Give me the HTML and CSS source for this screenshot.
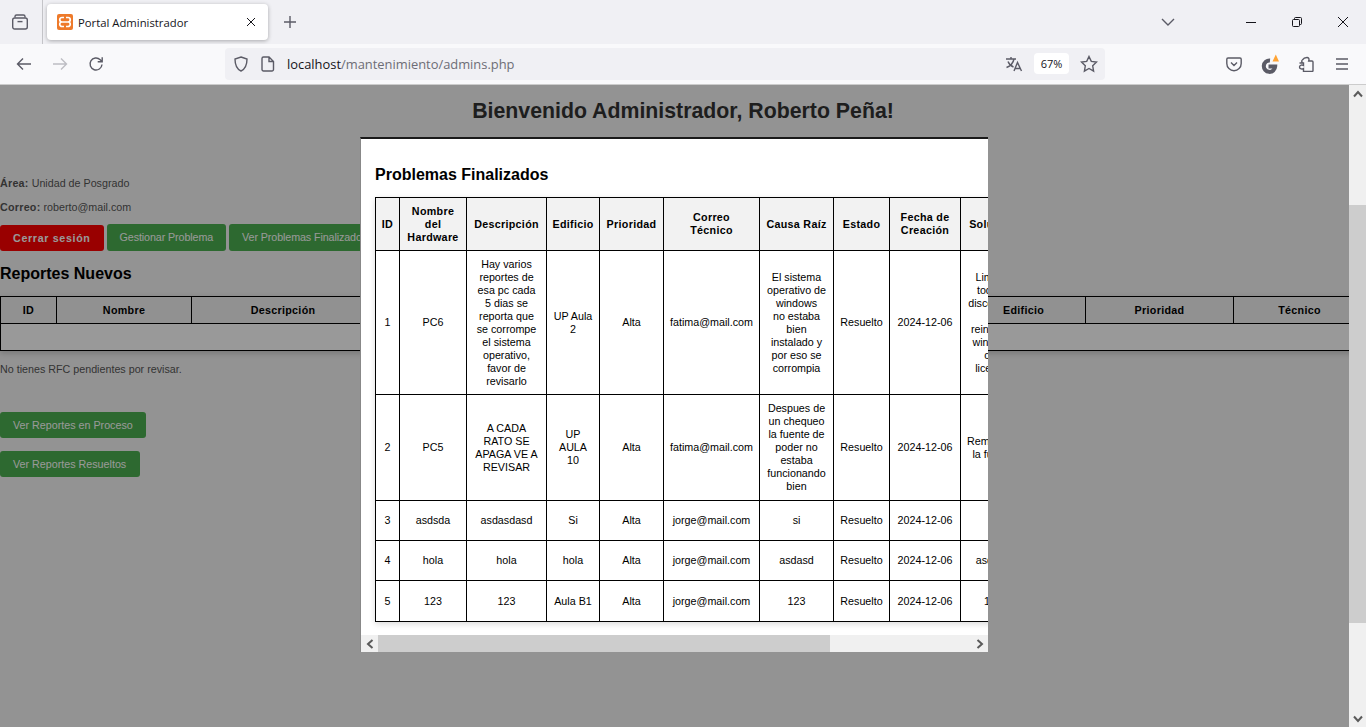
FILE: index.html
```html
<!DOCTYPE html>
<html lang="es">
<head>
    <meta charset="UTF-8">
    <meta name="viewport" content="width=device-width, initial-scale=1.0">
    <title>Portal Administrador</title>
    <link rel="stylesheet" href="styles.css">
</head>
<body>
    <!-- browser chrome -->
    <div class="tabbar">
        <div class="tab-btn first">
            <svg width="18" height="18" viewBox="0 0 18 18" class="ico"><path d="M4 4.5V3.6A1.6 1.6 0 0 1 5.6 2h6.8A1.6 1.6 0 0 1 14 3.6v.9"/><rect x="1.7" y="5" width="14.6" height="11" rx="2"/><path d="M6.5 8.6h5"/></svg>
        </div>
        <div class="tab-sep"></div>
        <div class="tab">
            <svg width="16" height="16" viewBox="0 0 16 16" class="favicon"><rect width="16" height="16" rx="2" fill="#EE7A2A"/><path d="M7 3.500H5a2.250 2.250 0 0 0 0 4.500h6a2.250 2.250 0 0 0 0-4.500H9M7 12.500H5a2.250 2.250 0 0 1 0-4.500M9 12.500h2a2.250 2.250 0 0 0 0-4.500" fill="none" stroke="#fff" stroke-width="1.700"/></svg>
            <span class="tab-title">Portal Administrador</span>
            <svg width="10" height="10" viewBox="0 0 10 10" class="thin"><path d="M1 1l8 8M9 1L1 9"/></svg>
        </div>
        <div class="tab-btn plus">
            <svg width="14" height="14" viewBox="0 0 14 14" class="ico"><path d="M7 1v12M1 7h12"/></svg>
        </div>
        <div class="spacer"></div>
        <div class="tab-btn chevron">
            <svg width="14" height="8" viewBox="0 0 14 8" class="ico"><path d="M1 1l6 6 6-6"/></svg>
        </div>
        <div class="win-btn"><svg width="10" height="10" viewBox="0 0 10 10" class="thin"><path d="M0 5.500h10"/></svg></div>
        <div class="win-btn"><svg width="10" height="10" viewBox="0 0 10 10" class="thin"><rect x=".5" y="2.500" width="7" height="7" rx="1"/><path d="M2.500 2.500V1.500a1 1 0 0 1 1-1h5a1 1 0 0 1 1 1v5a1 1 0 0 1-1 1h-1"/></svg></div>
        <div class="win-btn"><svg width="10" height="10" viewBox="0 0 10 10" class="thin"><path d="M0 0l10 10M10 0L0 10"/></svg></div>
    </div>

    <div class="toolbar">
        <div class="nav-btn"><svg width="16" height="16" viewBox="0 0 16 16" class="ico"><path d="M15 8H1.500M7 2.500L1.500 8 7 13.500"/></svg></div>
        <div class="nav-btn off"><svg width="16" height="16" viewBox="0 0 16 16" class="ico"><path d="M1 8h13.500M9 2.500L14.500 8 9 13.500"/></svg></div>
        <div class="nav-btn"><svg width="16" height="16" viewBox="0 0 16 16" class="ico"><path d="M14 8.500A6 6 0 1 1 12.200 3.700L14 5.500M14.200 1.200v4.500H9.700"/></svg></div>
        <div class="urlbar">
            <svg width="16" height="16" viewBox="0 0 16 16" class="ico url-shield"><path d="M8 1l6 2c0 6-1.500 10-6 12C3.500 13 2 9 2 3z"/></svg>
            <svg width="14" height="16" viewBox="0 0 14 16" class="ico url-page"><path d="M2.500 1h5.500l4.500 4.500V13.500a1.500 1.500 0 0 1-1.500 1.500h-8.500A1.500 1.500 0 0 1 1 13.500V2.500A1.500 1.500 0 0 1 2.500 1zM8 1v4.500h4.500"/></svg>
            <span class="url"><span class="host">localhost</span>/mantenimiento/admins.php</span>
            <div class="spacer"></div>
            <svg width="18" height="16" viewBox="0 0 18 16" class="ico"><path d="M1 3h10M6 1v2M9 3c-.8 4-3.600 7-7.500 8.500M3 5.500c1 2.500 3 4.500 5.500 5.500M9 15l3.500-8.500L16.500 15M10.300 12.500h5"/></svg>
            <span class="zoom-badge">67%</span>
            <svg width="18" height="18" viewBox="0 0 18 18" class="ico url-star"><path d="M9 1.500l2.300 4.900 5.200.7-3.800 3.700.9 5.300L9 13.500l-4.600 2.600.9-5.300L1.500 7.100l5.200-.7z"/></svg>
        </div>
        <div class="spacer"></div>
        <div class="nav-btn"><svg width="16" height="16" viewBox="0 0 16 16" class="ico"><path d="M2 2h12a1.200 1.200 0 0 1 1.200 1.200V7.500a7.200 7.200 0 0 1-14.400 0V3.200A1.200 1.200 0 0 1 2 2zM5 6.500l3 3 3-3"/></svg></div>
        <div class="nav-btn"><svg width="18" height="20" viewBox="0 0 18 20"><path d="M9 6.500A5.700 5.700 0 1 0 14.200 12.500H7.500" fill="none" stroke="#5B5B66" stroke-width="4"/><path d="M11.500 7.500L14.800 .5L18 7.500z" fill="#FFA436"/></svg></div>
        <div class="nav-btn"><svg width="16" height="16" viewBox="0 0 16 16" class="ico"><path d="M1.500 7h3c-1-1.200-.8-2.200-.3-2.800M9 1.500c1.500 0 2.500 1.300 1.700 3.500H14a1 1 0 0 1 1 1v8.500a1 1 0 0 1-1 1H5.500v-3c-1.200.8-4 .8-4-1.500s2.800-2.300 4-1.500V7H1.500M4.200 4.200C5 3 7 1.500 9 1.500"/></svg></div>
        <div class="nav-btn"><svg width="14" height="12" viewBox="0 0 14 12" class="ico"><path d="M1 1h12M1 6h12M1 11h12"/></svg></div>
    </div>

    <div class="viewport">
        <div class="page">
            <h1>Bienvenido Administrador, Roberto Peña!</h1>
            <p class="info"><strong>Área:</strong> Unidad de Posgrado</p>
            <p class="info last"><strong>Correo:</strong> roberto@mail.com</p>
            <div class="actions">
                <a class="btn btn-red">Cerrar sesión</a>
                <a class="btn">Gestionar Problema</a>
                <a class="btn">Ver Problemas Finalizados</a>
            </div>
            <h2>Reportes Nuevos</h2>
            <table class="reports">
                <thead>
                    <tr>
                        <th class="r-id">ID</th>
                        <th class="r-nombre">Nombre</th>
                        <th class="r-desc">Descripción</th>
                        <th class="r-estado">Estado</th>
                        <th class="r-edificio">Edificio</th>
                        <th class="r-prioridad">Prioridad</th>
                        <th class="r-tecnico">Técnico</th>
                    </tr>
                </thead>
                <tbody>
                    <tr><td colspan="7"></td></tr>
                </tbody>
            </table>
            <p class="empty">No tienes RFC pendientes por revisar.</p>
            <div class="stack">
                <a class="btn">Ver Reportes en Proceso</a>
                <a class="btn">Ver Reportes Resueltos</a>
            </div>

            <div class="overlay"></div>
            <div class="modal">
                <div class="modal-scroll">
                    <h2 class="modal-title">Problemas Finalizados</h2>
                    <table class="done">
                        <thead>
                            <tr class="h-head">
                                <th class="c-id">ID</th>
                                <th class="c-hw">Nombre del Hardware</th>
                                <th class="c-desc">Descripción</th>
                                <th class="c-edif">Edificio</th>
                                <th class="c-prio">Prioridad</th>
                                <th class="c-mail">Correo<br>Técnico</th>
                                <th class="c-causa">Causa Raíz</th>
                                <th class="c-estado">Estado</th>
                                <th class="c-fecha">Fecha de Creación</th>
                                <th class="c-sol">Solución</th>
                            </tr>
                        </thead>
                        <tbody>
                            <tr class="h-r1">
                                <td>1</td><td>PC6</td>
                                <td>Hay varios reportes de esa pc cada<br>5 dias se reporta que se corrompe el sistema operativo, favor de revisarlo</td>
                                <td>UP Aula 2</td><td>Alta</td><td>fatima@mail.com</td>
                                <td>El sistema operativo de windows<br>no estaba<br>bien<br>instalado y por eso se corrompia</td>
                                <td>Resuelto</td><td>2024-12-06</td>
                                <td>Limpiar<br>todo el<br>disco duro<br>y<br>reinstalar<br>windows<br>con<br>licencia</td>
                            </tr>
                            <tr class="h-r2">
                                <td>2</td><td>PC5</td>
                                <td>A CADA RATO SE APAGA VE A REVISAR</td>
                                <td>UP AULA 10</td><td>Alta</td><td>fatima@mail.com</td>
                                <td>Despues de un chequeo la fuente de poder no estaba funcionando bien</td>
                                <td>Resuelto</td><td>2024-12-06</td>
                                <td>Remplazar<br>la fuente</td>
                            </tr>
                            <tr class="h-r3">
                                <td>3</td><td>asdsda</td><td>asdasdasd</td><td>Si</td><td>Alta</td><td>jorge@mail.com</td><td>si</td><td>Resuelto</td><td>2024-12-06</td><td>si</td>
                            </tr>
                            <tr class="h-r3">
                                <td>4</td><td>hola</td><td>hola</td><td>hola</td><td>Alta</td><td>jorge@mail.com</td><td>asdasd</td><td>Resuelto</td><td>2024-12-06</td><td>asdasd</td>
                            </tr>
                            <tr class="h-r5">
                                <td>5</td><td>123</td><td>123</td><td>Aula B1</td><td>Alta</td><td>jorge@mail.com</td><td>123</td><td>Resuelto</td><td>2024-12-06</td><td>123</td>
                            </tr>
                        </tbody>
                    </table>
                </div>
                <div class="hscroll">
                    <div class="sb-arrow"><svg width="8" height="10" viewBox="0 0 8 10" class="sb-ico"><path d="M6.500 1L2 5l4.500 4"/></svg></div>
                    <div class="hthumb"></div>
                    <div class="spacer"></div>
                    <div class="sb-arrow"><svg width="8" height="10" viewBox="0 0 8 10" class="sb-ico"><path d="M1.500 1L6 5 1.500 9"/></svg></div>
                </div>
            </div>
        </div>
        <div class="vscroll">
            <div class="sb-arrow"><svg width="10" height="8" viewBox="0 0 10 8" class="sb-ico"><path d="M1 6.500L5 2l4 4.500"/></svg></div>
            <div class="vtrack-top"></div>
            <div class="vthumb"></div>
            <div class="spacer"></div>
            <div class="sb-arrow"><svg width="10" height="8" viewBox="0 0 10 8" class="sb-ico"><path d="M1 1.500L5 6l4-4.500"/></svg></div>
        </div>
    </div>
</body>
</html>
```

FILE: styles.css
```css
* {
    box-sizing: border-box;
}
html, body {
    margin: 0;
    height: 727px;
    overflow: hidden;
}
body {
    font-family: "Liberation Sans", Arial, sans-serif;
    display: flex;
    flex-direction: column;
    background-color: #F9F9FB;
}
.spacer {
    flex: 1;
}

/* browser chrome */
.ico {
    fill: none;
    stroke: #5B5B66;
    stroke-width: 1.4;
}
.thin {
    fill: none;
    stroke: #15141A;
    stroke-width: 1;
}
.tabbar {
    height: 44px;
    display: flex;
    align-items: center;
    background-color: #F0F0F4;
}
.tab-btn {
    width: 36px;
    height: 36px;
    display: flex;
    align-items: center;
    justify-content: center;
}
.tab-btn.first {
    width: 40px;
}
.tab-btn.plus {
    margin-left: 4px;
}
.tab-btn.chevron {
    margin-right: 42px;
}
.tab-sep {
    width: 1px;
    height: 44px;
    margin-left: 2px;
    background-color: #C4C4C8;
}
.tab {
    width: 221px;
    height: 36px;
    margin-left: 4px;
    padding: 0 12px 0 10px;
    display: flex;
    align-items: center;
    background-color: #FFFFFF;
    border-radius: 4px;
    box-shadow: 0 1px 4px rgba(0, 0, 0, 0.3);
}
.favicon {
    margin-right: 5px;
}
.tab-title {
    flex: 1;
    font-family: "Open Sans", sans-serif;
    font-size: 11.3px;
    color: #15141A;
}
.win-btn {
    width: 46px;
    height: 44px;
    display: flex;
    align-items: center;
    justify-content: center;
}
.toolbar {
    height: 41px;
    padding: 0 6px 1px 6px;
    display: flex;
    align-items: center;
    background-color: #F9F9FB;
    border-bottom: 1px solid #CCCCCC;
}
.nav-btn {
    width: 36px;
    height: 32px;
    display: flex;
    align-items: center;
    justify-content: center;
}
.nav-btn.off .ico {
    stroke: #BDBDC3;
}
.urlbar {
    width: 880px;
    height: 32px;
    margin-left: 111px;
    padding: 0 7px 0 8px;
    display: flex;
    align-items: center;
    background-color: #F0F0F4;
    border-radius: 4px;
}
.url {
    margin-left: 12px;
    font-family: "Open Sans", sans-serif;
    font-size: 12.9px;
    color: #6D6D76;
}
.host {
    color: #15141A;
}
.url-page {
    margin-left: 12px;
}
.zoom-badge {
    width: 35px;
    height: 21px;
    margin-left: 11px;
    display: flex;
    align-items: center;
    justify-content: center;
    font-family: "Open Sans", sans-serif;
    font-size: 11px;
    color: #15141A;
    background-color: #FFFFFF;
    border-radius: 4px;
}
.url-star {
    margin-left: 11px;
}

/* page under the modal, the sizes are from the 67% zoom */
.viewport {
    flex: 1;
    display: flex;
    min-height: 0;
}
.page {
    position: relative;
    flex: 1;
    padding-top: 14px;
    overflow: hidden;
    font-size: 10.72px;
    line-height: 13px;
    color: #555555;
    background-color: #F5F5F5;
}
h1 {
    width: 1366px;
    margin: 0 0 53px 0;
    font-size: 21.3px;
    line-height: 25px;
    text-align: center;
    color: #333333;
}
.info {
    margin: 0 0 11px 0;
}
.info.last {
    margin-bottom: 10px;
}
.info strong {
    letter-spacing: 0.25px;
}
.actions {
    display: flex;
    align-items: flex-end;
    gap: 3px;
}
.btn {
    display: block;
    height: 26px;
    padding: 0 13px;
    line-height: 26px;
    white-space: nowrap;
    color: #FFFFFF;
    background-color: #4CAF50;
    border-radius: 3px;
}
.actions .btn {
    height: 27px;
    line-height: 27px;
    letter-spacing: -0.1px;
}
.actions .btn-red {
    height: 26px;
    line-height: 26px;
    font-weight: bold;
    letter-spacing: 0.65px;
    background-color: #FF0000;
}
h2 {
    margin: 13px 0 13px 0;
    font-size: 16px;
    line-height: 19px;
    color: #000000;
}
.reports {
    width: 1366px;
    border-collapse: collapse;
    table-layout: fixed;
    background-color: #FFFFFF;
    box-shadow: 0 2px 6px rgba(0, 0, 0, 0.2);
}
.reports th, .reports td {
    height: 27px;
    padding: 0;
    border: 1px solid #000000;
    text-align: center;
    color: #000000;
}
.reports th {
    letter-spacing: 0.3px;
    background-color: #F2F2F2;
}
.r-id { width: 56px; }
.r-nombre { width: 135px; }
.r-desc { width: 183px; }
.r-estado { width: 587px; }
.r-edificio { width: 124px; }
.r-prioridad { width: 148px; }
.empty {
    margin: 12px 0 0 0;
}
.stack {
    margin-top: 36px;
    display: flex;
    flex-direction: column;
    align-items: flex-start;
    gap: 13px;
}
.stack .btn:last-child {
    padding-right: 14px;
}

/* modal */
.overlay {
    position: absolute;
    top: 0;
    left: 0;
    right: 0;
    bottom: 0;
    background-color: rgba(0, 0, 0, 0.4);
}
.modal {
    position: absolute;
    top: 52px;
    left: 360px;
    width: 628px;
    height: 515px;
    display: flex;
    flex-direction: column;
    background-color: #FFFFFF;
    border-top: 2px solid #1A1A1A;
    border-left: 1px solid #888888;
}
.modal-scroll {
    flex: 1;
    padding: 0 0 0 14px;
    overflow: hidden;
}
h2.modal-title {
    margin: 26px 0 13px 0;
}
.done {
    width: 650px;
    border-collapse: collapse;
    table-layout: fixed;
    color: #000000;
    box-shadow: 0 2px 6px rgba(0, 0, 0, 0.15);
}
.done th, .done td {
    padding: 0 5.36px;
    border: 1px solid #000000;
    text-align: center;
}
.done th {
    letter-spacing: 0.3px;
    background-color: #F2F2F2;
}
.done .c-desc, .done .c-causa {
    padding: 0 2px;
}
.h-head { height: 53px; }
.h-r1 { height: 144px; }
.h-r2 { height: 106px; }
.h-r3 { height: 40px; }
.h-r5 { height: 41px; }
.c-id { width: 24px; }
.c-hw { width: 67px; }
.c-desc { width: 80px; }
.c-edif { width: 53px; }
.c-prio { width: 64px; }
.c-mail { width: 96px; }
.c-causa { width: 74px; }
.c-estado { width: 56px; }
.c-fecha { width: 71px; }
.c-sol { width: 65px; }

/* scrollbars */
.sb-ico {
    fill: none;
    stroke: #5A5A5A;
    stroke-width: 2;
}
.sb-arrow {
    width: 17px;
    height: 17px;
    flex: none;
    display: flex;
    align-items: center;
    justify-content: center;
}
.hscroll {
    height: 17px;
    flex: none;
    display: flex;
    background-color: #F0F0F0;
}
.hthumb {
    width: 452px;
    background-color: #CDCDCD;
}
.vscroll {
    width: 17px;
    display: flex;
    flex-direction: column;
    background-color: #F0F0F0;
}
.vtrack-top {
    height: 103px;
}
.vthumb {
    height: 418px;
    background-color: #CDCDCD;
}
```
